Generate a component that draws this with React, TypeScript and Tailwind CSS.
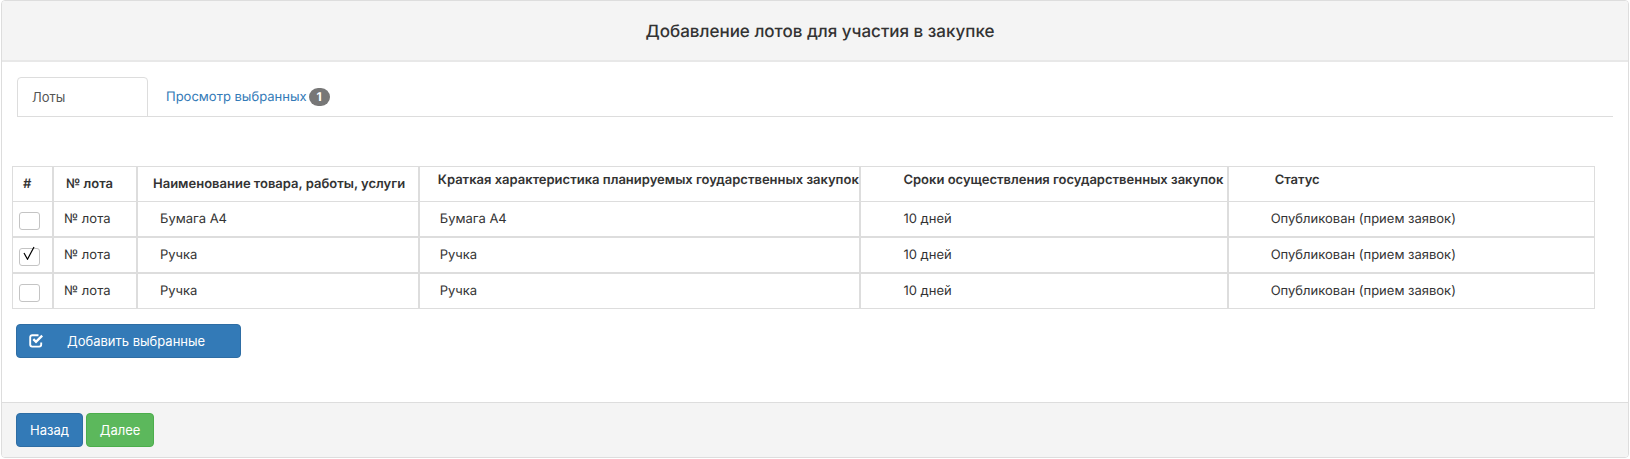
import { useState } from 'react';

interface Lot {
  id: number;
  number: string;
  name: string;
  description: string;
  term: string;
  status: string;
}

const lots: Lot[] = [
  { id: 1, number: '№ лота', name: 'Бумага А4', description: 'Бумага А4', term: '10 дней', status: 'Опубликован (прием заявок)' },
  { id: 2, number: '№ лота', name: 'Ручка', description: 'Ручка', term: '10 дней', status: 'Опубликован (прием заявок)' },
  { id: 3, number: '№ лота', name: 'Ручка', description: 'Ручка', term: '10 дней', status: 'Опубликован (прием заявок)' },
];

function CheckIcon() {
  return (
    <svg viewBox="0 0 14 14" className="w-3.5 h-3.5" fill="none" stroke="currentColor" aria-hidden="true">
      <path d="M9.5 1.2H3.2a2 2 0 0 0-2 2v7.4a2 2 0 0 0 2 2h7a2 2 0 0 0 2-2V8.5" strokeWidth="1.9" />
      <path d="M4.3 5.2L7 7.9L13.2 1.7" strokeWidth="2.4" />
    </svg>
  );
}

interface LotCheckboxProps {
  label: string;
  checked: boolean;
  onChange: () => void;
}

function LotCheckbox({ label, checked, onChange }: LotCheckboxProps) {
  return (
    <label className="relative block w-[21px] h-[18px]">
      <input
        type="checkbox"
        aria-label={label}
        checked={checked}
        onChange={onChange}
        className="block w-full h-full appearance-none bg-white border border-[#c4c4c4] rounded-[3px]"
      />
      {checked && (
        <svg
          viewBox="0 0 12 14"
          className="absolute left-1 -top-0.5 w-3 h-3.5 text-black pointer-events-none"
          fill="none"
          stroke="currentColor"
          aria-hidden="true"
        >
          <path d="M1 7L4.5 13.2L11 1" strokeWidth="1.2" />
        </svg>
      )}
    </label>
  );
}

export default function App() {
  const [selected, setSelected] = useState<number[]>([2]);

  const toggleLot = (id: number) => {
    setSelected((prev) => (prev.includes(id) ? prev.filter((item) => item !== id) : [...prev, id]));
  };

  return (
    <div className="px-px font-[Inter,'Noto_Sans',sans-serif] text-[13px] leading-5 text-[#333] [text-rendering:geometricPrecision]">
      <div className="border border-[#ddd] rounded bg-white overflow-hidden">
        <header className="bg-[#f4f4f4] border-b-2 border-[#e8e8e8] pt-[19px] pb-4 pl-2.5">
          <h1 className="text-[17px] leading-6 font-medium text-center">Добавление лотов для участия в закупке</h1>
        </header>

        <main className="pt-[15px] pb-11">
          <nav className="flex items-end mx-[15px] border-b border-[#ddd]">
            <button
              type="button"
              className="w-[131px] h-10 -mb-px px-3.5 text-left text-[#555] border border-[#ddd] rounded-t"
            >
              Лоты
            </button>
            <a href="#selected" className="flex items-center h-[38px] ml-[18px] text-[#337ab7]">
              Просмотр выбранных
              <span className="ml-0.5 w-[21px] h-[18px] leading-[18px] text-center rounded-full bg-[#777] text-white text-xs font-bold">
                {selected.length}
              </span>
            </a>
          </nav>

          <div className="mt-[49px] ml-2.5 mr-[33px]">
            <table className="w-full table-fixed border-separate border-spacing-0">
              <colgroup>
                <col className="w-[41px]" />
                <col className="w-[84px]" />
                <col className="w-[17.8%]" />
                <col className="w-[27.9%]" />
                <col className="w-[23.2%]" />
                <col />
              </colgroup>
              <thead>
                <tr className="h-[35px] text-left whitespace-nowrap [&>th]:font-semibold [&>th]:border [&>th]:border-b-0 [&>th]:border-[#ddd]">
                  <th className="pl-2.5">#</th>
                  <th className="pl-3">№ лота</th>
                  <th className="pl-[15px]">Наименование товара, работы, услуги</th>
                  <th className="pl-[18px] pb-2">Краткая характеристика планируемых гоударственных закупок</th>
                  <th className="pl-[42px] pb-2">Сроки осуществления государственных закупок</th>
                  <th className="pl-[46px] pb-2">Статус</th>
                </tr>
              </thead>
              <tbody>
                {lots.map((lot) => (
                  <tr key={lot.id} className="h-9 [&>td]:border [&>td]:border-[#ddd]">
                    <td className="pl-1.5 pt-[3px]">
                      <LotCheckbox
                        label={`Выбрать лот ${lot.id}`}
                        checked={selected.includes(lot.id)}
                        onChange={() => toggleLot(lot.id)}
                      />
                    </td>
                    <td className="pl-2.5">{lot.number}</td>
                    <td className="pl-[22px]">{lot.name}</td>
                    <td className="pl-5">{lot.description}</td>
                    <td className="pl-[42px]">{lot.term}</td>
                    <td className="pl-[42px]">{lot.status}</td>
                  </tr>
                ))}
              </tbody>
            </table>
          </div>

          <button
            type="button"
            className="flex items-center gap-6 w-[225px] h-[34px] mt-[15px] ml-3.5 px-3 bg-[#337ab7] border border-[#2e6da4] rounded text-white"
          >
            <CheckIcon />
            Добавить выбранные
          </button>
        </main>

        <footer className="flex gap-[3px] px-3.5 py-2.5 bg-[#f4f4f4] border-t border-[#ddd]">
          <button type="button" className="h-[34px] px-[13px] bg-[#337ab7] border border-[#2e6da4] rounded text-white">
            Назад
          </button>
          <button type="button" className="h-[34px] px-[13px] bg-[#5cb85c] border border-[#4cae4c] rounded text-white">
            Далее
          </button>
        </footer>
      </div>
    </div>
  );
}
